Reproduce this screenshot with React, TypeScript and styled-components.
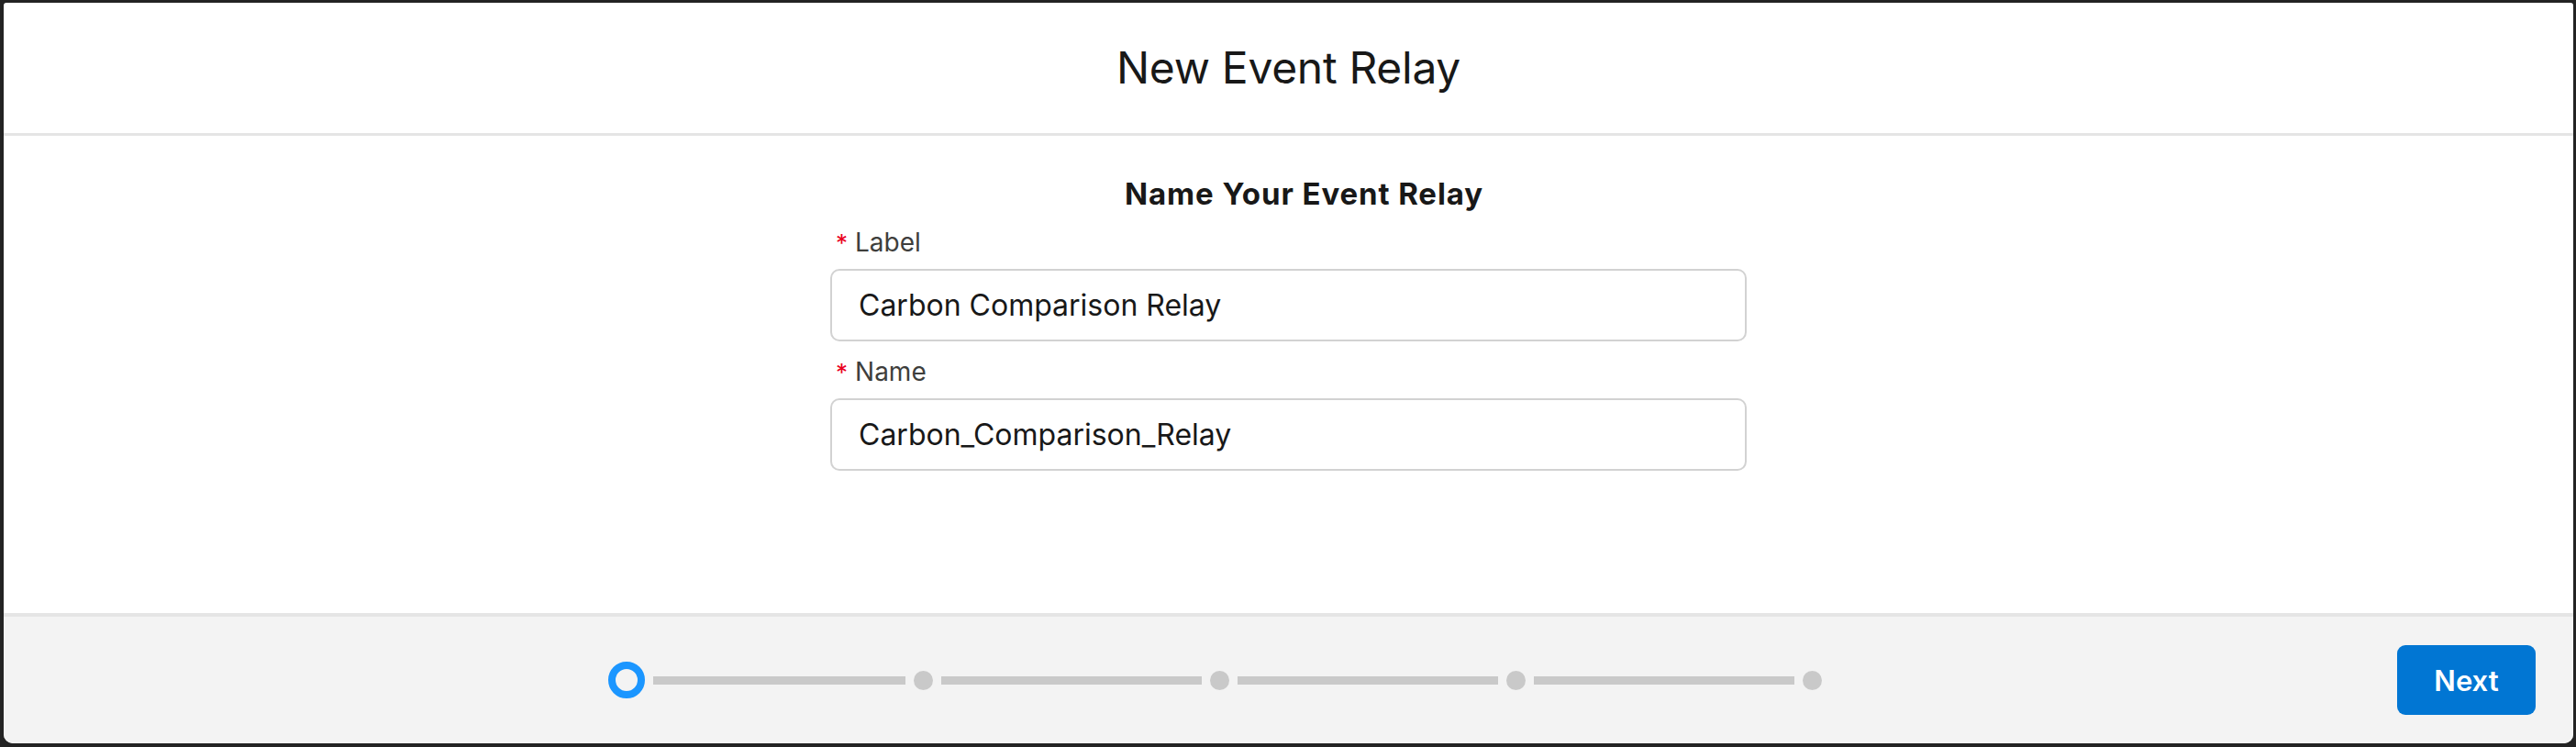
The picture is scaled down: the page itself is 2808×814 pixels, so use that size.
import React from "react";
import styled, { createGlobalStyle } from "styled-components";

const GlobalStyle = createGlobalStyle`
  html, body {
    margin: 0;
    padding: 0;
    background: #232323;
  }
  * { box-sizing: border-box; }
  body {
    font-family: Inter, "Noto Sans", "Liberation Sans", sans-serif;
    -webkit-font-smoothing: antialiased;
  }
`;

const Frame = styled.div`
  width: 2808px;
  height: 814px;
  padding: 3px 3px 4px 4px;
  background: #232323;
`;

const Modal = styled.div`
  height: 100%;
  display: flex;
  flex-direction: column;
  background: #ffffff;
  border-radius: 3px 3px 10px 10px;
  overflow: hidden;
`;

const Header = styled.header`
  height: 145px;
  flex: none;
  display: flex;
  align-items: center;
  justify-content: center;
  border-bottom: 3px solid #e5e5e5;
`;

const Title = styled.h1`
  margin: 0;
  font-size: 48px;
  font-weight: 400;
  line-height: 1;
  color: #181818;
  letter-spacing: -0.3px;
`;

const Body = styled.main`
  flex: 1;
  display: flex;
  flex-direction: column;
  align-items: center;
  padding-top: 45px;
`;

const SectionTitle = styled.h2`
  margin: 0 0 18px;
  padding-left: 34px;
  font-size: 33px;
  line-height: 36px;
  font-weight: 700;
  letter-spacing: 0.9px;
  color: #181818;
`;

const Fields = styled.div`
  width: 999px;
  display: flex;
  flex-direction: column;
  gap: 16px;
`;

const Field = styled.div`
  display: flex;
  flex-direction: column;
  gap: 11px;
`;

const Label = styled.label`
  display: flex;
  align-items: baseline;
  gap: 8px;
  padding-left: 6px;
  font-size: 28px;
  line-height: 34px;
  color: #3e3e3c;
`;

const Required = styled.abbr`
  color: #ea001e;
  text-decoration: none;
  font-size: 26px;
`;

const TextInput = styled.input`
  height: 79px;
  width: 100%;
  padding: 0 29px;
  border: 2px solid #d2d2d2;
  border-radius: 10px;
  background: #fff;
  font-family: inherit;
  font-size: 32px;
  color: #181818;
  outline: none;
`;

const Footer = styled.footer`
  height: 142px;
  flex: none;
  display: flex;
  align-items: center;
  justify-content: space-between;
  background: #f3f3f3;
  border-top: 4px solid #e5e5e5;
  padding: 0 41px 0 659px;
`;

const Progress = styled.div`
  display: flex;
  align-items: center;
`;

const ActiveStep = styled.span`
  width: 40px;
  height: 40px;
  border-radius: 50%;
  border: 8px solid #1b96ff;
  background: #f3f3f3;
  flex: none;
`;

const Step = styled.span`
  width: 21px;
  height: 21px;
  border-radius: 50%;
  background: #c9c9c9;
  flex: none;
`;

const Track = styled.span<{ $w: number }>`
  width: ${(p) => p.$w}px;
  height: 9px;
  margin: 0 9px;
  background: #c9c9c9;
  flex: none;
`;

const NextButton = styled.button`
  width: 151px;
  height: 76px;
  border: none;
  border-radius: 9px;
  background: #0176d3;
  color: #fff;
  font-family: inherit;
  font-size: 31px;
  font-weight: 600;
  cursor: pointer;
`;

export default function App() {
  return (
    <>
      <GlobalStyle />
      <Frame>
        <Modal>
          <Header>
            <Title>New Event Relay</Title>
          </Header>
          <Body>
            <SectionTitle>Name Your Event Relay</SectionTitle>
            <Fields>
              <Field>
                <Label>
                  <Required title="required">*</Required>
                  Label
                </Label>
                <TextInput defaultValue="Carbon Comparison Relay" />
              </Field>
              <Field>
                <Label>
                  <Required title="required">*</Required>
                  Name
                </Label>
                <TextInput defaultValue="Carbon_Comparison_Relay" />
              </Field>
            </Fields>
          </Body>
          <Footer>
            <Progress>
              <ActiveStep />
              <Track $w={275} />
              <Step />
              <Track $w={284} />
              <Step />
              <Track $w={284} />
              <Step />
              <Track $w={284} />
              <Step />
            </Progress>
            <NextButton>Next</NextButton>
          </Footer>
        </Modal>
      </Frame>
    </>
  );
}
